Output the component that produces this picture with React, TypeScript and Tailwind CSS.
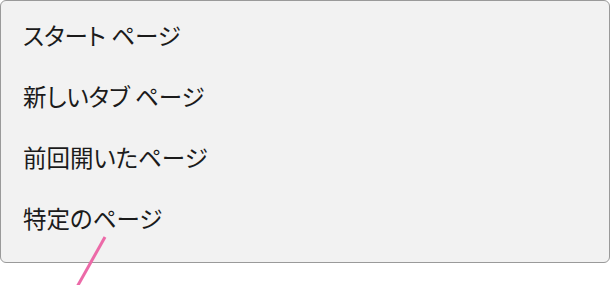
const items = ["スタート ページ", "新しいタブ ページ", "前回開いたページ", "特定のページ"];

export default function App() {
  return (
    <div className="relative h-[285px] w-[611px] bg-white">
      <div className="w-[610px] h-[263px] rounded-[6px] border border-[#9a9a9a] bg-[#f2f2f2] pt-[4px]">
        {items.map((label) => (
          <div
            key={label}
            className="flex h-[61px] items-center pl-[22px] text-[23.5px] text-[#1b1b1b] [font-feature-settings:'palt']"
            style={{ fontFamily: '"Noto Sans CJK JP", "Noto Sans", sans-serif' }}
          >
            {label}
          </div>
        ))}
      </div>
      <svg className="absolute left-0 top-0" width="611" height="285">
        <line x1="105" y1="237" x2="77" y2="287" stroke="#ec6aa8" strokeWidth="3" />
      </svg>
    </div>
  );
}
